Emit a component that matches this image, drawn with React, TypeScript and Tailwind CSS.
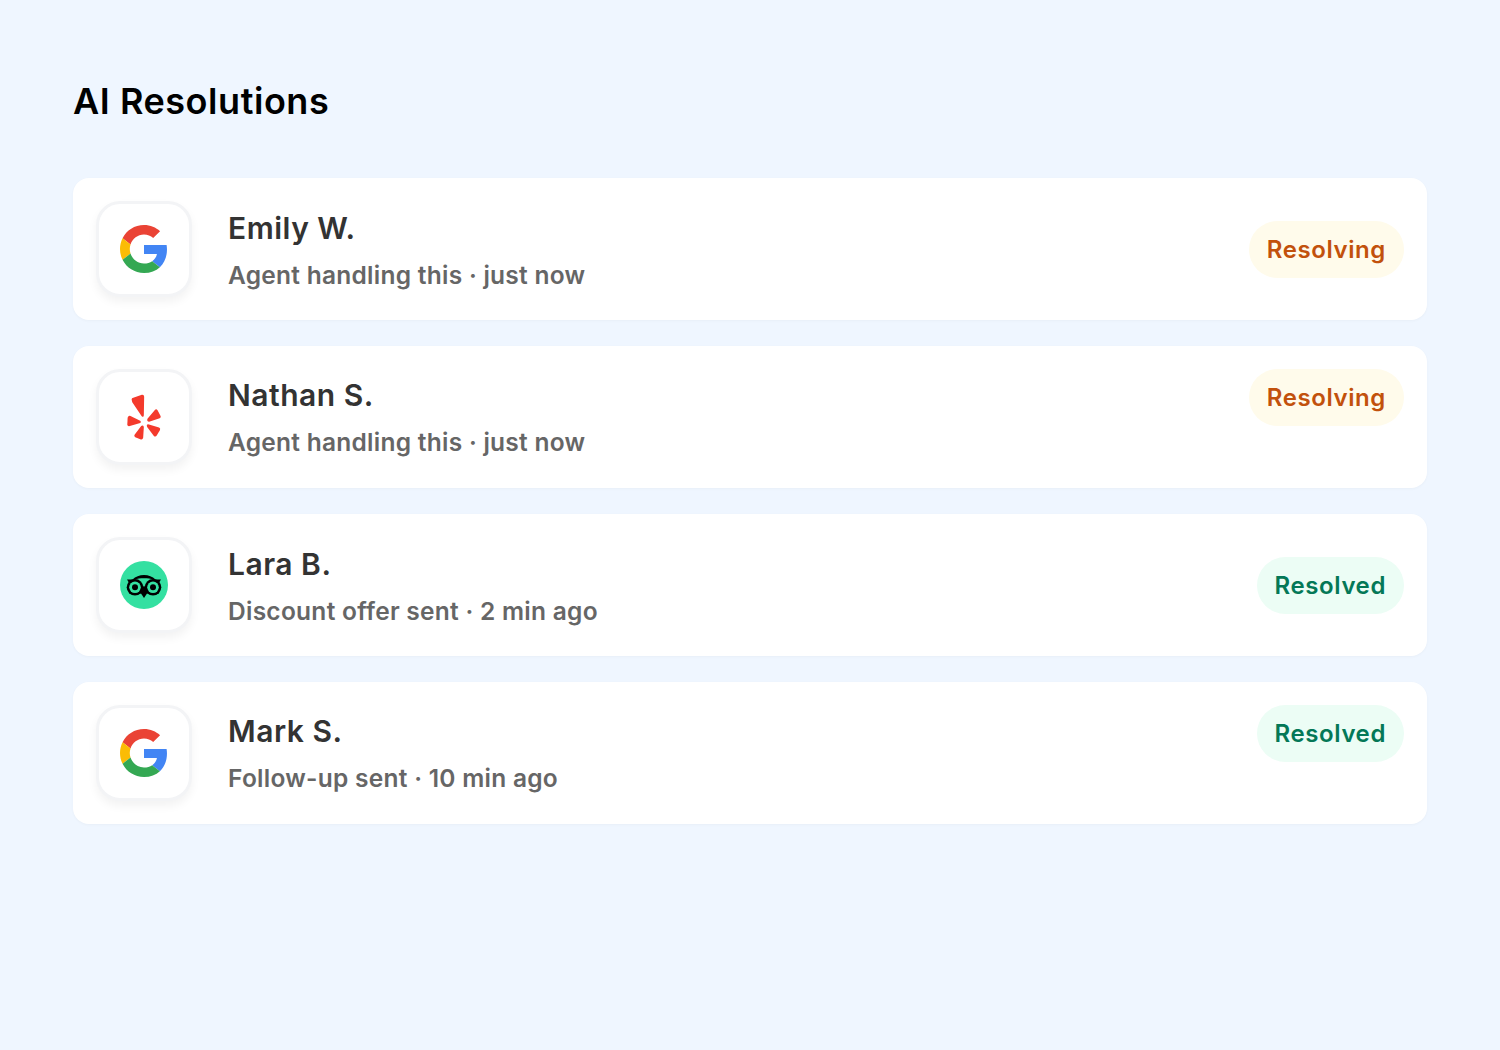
const resolutions = [
  { name: "Emily W.", detail: "Agent handling this · just now", source: "google", status: "Resolving", align: "center" },
  { name: "Nathan S.", detail: "Agent handling this · just now", source: "yelp", status: "Resolving", align: "top" },
  { name: "Lara B.", detail: "Discount offer sent · 2 min ago", source: "tripadvisor", status: "Resolved", align: "center" },
  { name: "Mark S.", detail: "Follow-up sent · 10 min ago", source: "google", status: "Resolved", align: "top" },
];

function GoogleIcon() {
  return (
    <svg viewBox="0 0 48 48" className="h-12 w-12">
      <path fill="#EA4335" d="M24 9.5c3.54 0 6.71 1.22 9.21 3.6l6.85-6.85C35.9 2.38 30.47 0 24 0 14.62 0 6.51 5.38 2.56 13.22l7.98 6.19C12.43 13.72 17.74 9.5 24 9.5z" />
      <path fill="#4285F4" d="M46.98 24.55c0-1.57-.15-3.09-.38-4.55H24v9.02h12.94c-.58 2.96-2.26 5.48-4.78 7.18l7.73 6c4.51-4.18 7.09-10.36 7.09-17.65z" />
      <path fill="#FBBC05" d="M10.53 28.59c-.48-1.45-.76-2.99-.76-4.59s.27-3.14.76-4.59l-7.98-6.19C.92 16.46 0 20.12 0 24c0 3.88.92 7.54 2.56 10.78l7.97-6.19z" />
      <path fill="#34A853" d="M24 48c6.48 0 11.93-2.13 15.89-5.81l-7.73-6c-2.15 1.45-4.92 2.3-8.16 2.3-6.26 0-11.57-4.22-13.47-9.91l-7.98 6.19C6.51 42.62 14.62 48 24 48z" />
    </svg>
  );
}

function YelpIcon() {
  return (
    <svg viewBox="135 100 115 150" className="h-[50px] w-[38px]" fill="#F43A2C">
      <path d="M155 122Q155 118 160 117L186 108Q193 107 193 114L192 170Q191 178 185 172L157 130Z" />
      <path d="M203 180L226 153Q230 150 234 155L243 173Q244 178 240 179L208 189Q200 188 203 180Z" />
      <path d="M150 171L181 186Q186 190 181 193L147 203Q142 203 142 198L143 177Q145 170 150 171Z" />
      <path d="M192 205L190 238Q188 245 183 243L166 236Q161 233 164 229L184 202Q190 199 192 205Z" />
      <path d="M205 197L238 207Q243 210 241 214L231 231Q228 236 223 233L202 205Q199 198 205 197Z" />
    </svg>
  );
}

function TripadvisorIcon() {
  return (
    <svg viewBox="0 0 48 48" className="h-12 w-12">
      <circle cx="24" cy="24" r="24" fill="#34E0A1" />
      <path d="M7 18.500H12.500C15.500 15.500 19.500 14 24 14C28.500 14 32.500 15.500 35.500 18.500H41C40 19.800 39.300 21 39 22.500H9C8.700 21 8 19.800 7 18.500Z" />
      <path d="M15 18.500C19 16.800 29 16.800 33 18.500L24 25Z" fill="#34E0A1" />
      <path d="M20 31L24 37L28 31L24 24.500Z" />
      <circle cx="15" cy="26.300" r="8.300" />
      <circle cx="33" cy="26.300" r="8.300" />
      <circle cx="15" cy="26.300" r="5.800" fill="#34E0A1" />
      <circle cx="33" cy="26.300" r="5.800" fill="#34E0A1" />
      <circle cx="15" cy="26.300" r="3" />
      <circle cx="33" cy="26.300" r="3" />
    </svg>
  );
}

function SourceIcon({ source }: { source: string }) {
  return (
    <div className="grid h-24 w-24 shrink-0 place-items-center rounded-3xl border-[3px] border-[#f3f4f6] bg-white shadow-[0_5px_10px_rgba(0,0,0,0.05)]">
      {source === "google" && <GoogleIcon />}
      {source === "yelp" && <YelpIcon />}
      {source === "tripadvisor" && <TripadvisorIcon />}
    </div>
  );
}

export default function App() {
  return (
    <div className="min-h-[1050px] bg-[#eff6ff] px-[73px] pt-[77px] font-['Inter',sans-serif]">
      <h1 className="text-[36px] leading-[48px] font-semibold tracking-[0.55px] text-black">AI Resolutions</h1>

      <div className="mt-[53px] flex flex-col gap-[26px]">
        {resolutions.map((r) => (
          <div
            key={r.name}
            className={`flex h-[142px] justify-between rounded-2xl bg-white p-[23px] shadow-[0_1px_3px_rgba(0,0,0,0.03)] ${r.align === "center" ? "items-center" : "items-start"}`}
          >
            <div className="flex items-center gap-9">
              <SourceIcon source={r.source} />
              <div className={r.align === "center" ? "pt-1" : "pt-0.5"}>
                <div className="text-[30px] leading-[40px] font-semibold tracking-[0.5px] text-[#333333]">{r.name}</div>
                <div className="mt-[7px] text-[24.5px] leading-[40px] font-semibold tracking-[0.27px] text-[#666666]">{r.detail}</div>
              </div>
            </div>
            {r.status === "Resolving" ? (
              <span className="rounded-full bg-[#fffbeb] px-[18px] py-[11px] text-[24px] leading-[35px] font-semibold tracking-[0.6px] text-[#c2510c]">
                {r.status}
              </span>
            ) : (
              <span className="rounded-full bg-[#ecfdf5] px-[18px] py-[11px] text-[24px] leading-[35px] font-semibold tracking-[0.6px] text-[#047857]">
                {r.status}
              </span>
            )}
          </div>
        ))}
      </div>
    </div>
  );
}
